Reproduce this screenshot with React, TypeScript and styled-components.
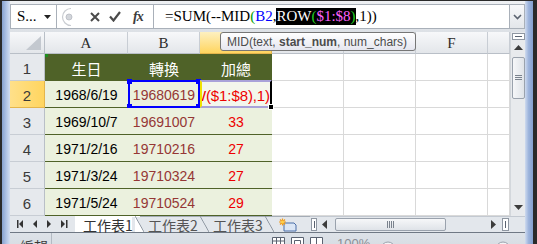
import styled, { createGlobalStyle, css } from 'styled-components';

const GlobalStyle = createGlobalStyle`
  *, *::before, *::after { box-sizing: border-box; }
  html, body { margin: 0; padding: 0; background: #ffffff; }
  body { font-family: "Liberation Sans", Arial, sans-serif; }
`;

const Window = styled.div`
  width: 537px;
  height: 244px;
  overflow: hidden;
  display: flex;
  border-top: 1px solid #2a2a2a;
`;

const FrameLeft = styled.div`
  width: 10px;
  flex: none;
  border-left: 2px solid #2a2a2a;
  background: linear-gradient(to right, #86a1cf, #b4c7e7 60%, #d3def0);
`;

const FrameRight = styled.div`
  width: 12px;
  flex: none;
  border-right: 4px solid #2a2a2a;
  background: linear-gradient(to right, #cfdbef, #9db4dc 45%, #839fcf);
`;

const Main = styled.div`
  position: relative;
  flex: 1;
  min-width: 0;
  display: flex;
  flex-direction: column;
  background: #e3e7ec;
`;

/* ---------- formula bar ---------- */

const FormulaStrip = styled.div`
  height: 31px;
  flex: none;
  display: flex;
  padding: 3px 0;
  background: linear-gradient(#eef0f3, #dde1e6);
`;

const NameBox = styled.div`
  width: 47px;
  display: flex;
  align-items: center;
  padding: 0 5px 0 6px;
  background: #fff;
  border: 1px solid #a9b0b9;
  font: 15px "Liberation Serif", serif;
  color: #000;

  svg { margin-left: auto; }
`;

const ToolGroup = styled.div`
  width: 96px;
  display: flex;
  align-items: center;
  background: #fff;
  border-top: 1px solid #a9b0b9;
  border-bottom: 1px solid #a9b0b9;
`;

const ToolIcon = styled.span<{ $gap: number }>`
  display: flex;
  margin-left: ${p => p.$gap}px;
`;

const Fx = styled.span`
  margin-left: 12px;
  font: italic bold 14px "Liberation Serif", serif;
  color: #3c3c3c;
  letter-spacing: -1px;
`;

const FormulaInput = styled.div`
  flex: 1;
  display: flex;
  align-items: center;
  padding-left: 11px;
  background: #fff;
  border: 1px solid #a9b0b9;
  font: 15px "Liberation Serif", serif;
  color: #000;
  white-space: pre;
`;

const Tok = styled.span<{ $c: string }>`
  color: ${p => p.$c};
`;

const Selected = styled.span`
  background: #000;
  color: #fff;
`;

const ExpandBtn = styled.div`
  width: 15px;
  display: flex;
  align-items: center;
  justify-content: center;
  background: linear-gradient(#f7f8fa, #e3e6ea);
  border: 1px solid #a9b0b9;
  border-left: none;
`;

/* ---------- sheet ---------- */

const SheetRow = styled.div`
  height: 184px;
  flex: none;
  display: flex;
`;

const Grid = styled.div`
  width: 500px;
  display: grid;
  grid-template-columns: 35px 83px repeat(5, 72px) 22px;
  grid-template-rows: 22px repeat(6, 27px);
  background: #fff;
`;

const Corner = styled.div`
  display: flex;
  align-items: flex-end;
  justify-content: flex-end;
  padding: 0 3px 3px 0;
  background: linear-gradient(#f7f8fa, #e3e6ea);
  border-right: 1px solid #b9bfc7;
  border-bottom: 1px solid #b9bfc7;
`;

const ColHead = styled.div<{ $sel?: boolean }>`
  display: flex;
  align-items: center;
  justify-content: center;
  padding-top: 2px;
  font: 15px "Liberation Serif", serif;
  color: #2b2b2b;
  background: ${p => (p.$sel ? 'linear-gradient(#fdf0c0, #ffd55f)' : 'linear-gradient(#f7f8fa, #e3e6ea)')};
  border-right: 1px solid ${p => (p.$sel ? '#e4b54c' : '#c8cdd4')};
  border-bottom: 1px solid ${p => (p.$sel ? '#e4b54c' : '#b9bfc7')};
`;

const RowHead = styled.div<{ $sel?: boolean }>`
  display: flex;
  align-items: center;
  justify-content: center;
  padding-top: 3px;
  font-size: 15px;
  color: #3a3a3a;
  background: ${p => (p.$sel ? 'linear-gradient(to right, #ffe08a, #ffd55f)' : '#e6e9ed')};
  border-right: 1px solid ${p => (p.$sel ? '#e4b54c' : '#b9bfc7')};
  border-bottom: 1px solid ${p => (p.$sel ? '#e4b54c' : '#c8cdd4')};
`;

type Kind = 'title' | 'data' | 'blank';

const Cell = styled.div<{ $kind: Kind; $ink?: string }>`
  position: relative;
  display: flex;
  align-items: center;
  justify-content: center;
  padding-top: 2px;
  white-space: nowrap;
  font-size: 14px;
  color: ${p => p.$ink || '#000'};

  ${p => p.$kind === 'title' && css`
    background: #4f6228;
    color: #fff;
    font: 15px "Noto Sans CJK TC", sans-serif;
    border-bottom: 1px solid #4f6228;
  `}
  ${p => p.$kind === 'data' && css`
    background: #ebf1de;
    border-bottom: 1px solid #4f6228;
  `}
  ${p => p.$kind === 'blank' && css`
    border-right: 1px solid #d9d9d9;
    border-bottom: 1px solid #d9d9d9;
  `}
`;

const ErrorMark = styled.span`
  position: absolute;
  left: 0;
  top: 0;
  width: 3px;
  height: 3px;
  background: #1e8e1e;
`;

const RefBox = styled.span`
  position: absolute;
  inset: -1px 0 -1px 0;
  border: 2px solid #0000ff;
  pointer-events: none;
`;

const Handle = styled.span<{ $x: 'l' | 'r'; $y: 't' | 'b' }>`
  position: absolute;
  width: 5px;
  height: 5px;
  background: #0000ff;
  ${p => (p.$x === 'l' ? 'left: -3px;' : 'right: -3px;')}
  ${p => (p.$y === 't' ? 'top: -3px;' : 'bottom: -3px;')}
`;

const EditCell = styled.div`
  position: relative;
  z-index: 2;
  display: flex;
  justify-content: flex-end;
  align-items: center;
  background: #f3f6ec;
  border-top: 2px solid #a9a2d9;
  border-bottom: 2px solid #a9a2d9;
  border-left: 2px solid #f0e200;
  border-right: 2px solid #000;
  margin-top: -1px;
`;

const EditText = styled.div`
  width: 100%;
  display: flex;
  justify-content: flex-end;
  overflow: hidden;
  white-space: nowrap;
  padding-top: 2px;
  font-size: 15px;
  letter-spacing: -0.1px;
  color: #ee0000;
`;

const FillHandle = styled.span`
  position: absolute;
  right: -4px;
  bottom: -4px;
  width: 6px;
  height: 6px;
  background: #000;
  border: 1px solid #fff;
`;

const Tooltip = styled.div`
  position: absolute;
  left: 210px;
  top: 31px;
  z-index: 5;
  width: 196px;
  height: 19px;
  padding: 0 6px;
  display: flex;
  align-items: center;
  background: linear-gradient(#ffffff, #e5e6ef);
  border: 1px solid #767676;
  border-radius: 3px;
  font-size: 12px;
  color: #4c4c4c;
  white-space: pre;

  b { font-weight: bold; }
`;

const VScroll = styled.div`
  width: 15px;
  display: flex;
  flex-direction: column;
  align-items: center;
  background: #e8eaed;
  border-left: 1px solid #d3d7dc;
`;

const SplitBox = styled.div`
  width: 13px;
  height: 7px;
  margin-top: 1px;
  display: flex;
  align-items: center;
  justify-content: center;
  background: #fff;
  border: 1px solid #8f97a2;

  &::after {
    content: '';
    width: 7px;
    height: 1px;
    background: #5a6270;
  }
`;

const Arrow = styled.div<{ $h: number }>`
  height: ${p => p.$h}px;
  width: 100%;
  display: flex;
  align-items: center;
  justify-content: center;
  flex: none;
`;

const VThumb = styled.div`
  width: 13px;
  height: 42px;
  margin-top: 3px;
  display: flex;
  align-items: center;
  justify-content: center;
  border: 1px solid #9aa2ad;
  border-radius: 2px;
  background: linear-gradient(to right, #f6f7f9, #dfe3e8);
`;

const Spacer = styled.div`
  flex: 1;
`;

/* ---------- sheet tabs ---------- */

const TabBar = styled.div`
  height: 16px;
  flex: none;
  display: flex;
  align-items: stretch;
  background: #e3e7ec;
`;

const Nav = styled.div`
  width: 65px;
  display: flex;
  align-items: center;
`;

const Tab = styled.div<{ $active?: boolean }>`
  position: relative;
  width: 65px;
  padding-left: 8px;
  display: flex;
  align-items: center;
  font: 14px "Noto Sans CJK TC", sans-serif;
  color: ${p => (p.$active ? '#333' : '#555')};
  background: ${p => (p.$active ? 'linear-gradient(to right, #fff calc(100% - 8px), transparent calc(100% - 8px))' : 'transparent')};
  border-top: 1px solid ${p => (p.$active ? '#fff' : '#a4acb6')};

  &::after {
    content: '';
    position: absolute;
    right: -4px;
    top: -1px;
    bottom: 0;
    width: 9px;
    background: ${p =>
      p.$active
        ? 'linear-gradient(to top right, #fff calc(50% - 0.8px), #8a939e 50%, transparent calc(50% + 0.8px))'
        : 'linear-gradient(to top right, transparent calc(50% - 0.8px), #8a939e 50%, transparent calc(50% + 0.8px))'};
  }
`;

const NewTab = styled.div`
  width: 40px;
  display: flex;
  align-items: center;
  padding-left: 9px;
  border-top: 1px solid #a4acb6;
`;

const HScroll = styled.div`
  flex: 1;
  display: flex;
  align-items: center;
  border-top: 1px solid #c3c9d1;
`;

const Splitter = styled.div`
  width: 6px;
  height: 13px;
  margin-left: 1px;
  display: flex;
  justify-content: center;
  align-items: center;
  background: #fff;
  border: 1px solid #8f97a2;

  &::after {
    content: '';
    width: 1px;
    height: 7px;
    background: #5a6270;
  }
`;

const HArrow = styled.div`
  width: 15px;
  display: flex;
  justify-content: center;
`;

const HThumb = styled.div`
  width: 111px;
  height: 13px;
  margin-left: 3px;
  display: flex;
  align-items: center;
  justify-content: center;
  border: 1px solid #9aa2ad;
  border-radius: 2px;
  background: linear-gradient(#f6f7f9, #dfe3e8);
`;

const CornerBox = styled.div`
  width: 7px;
  height: 13px;
  margin: 0 16px 0 1px;
  display: flex;
  justify-content: center;
  align-items: center;
  background: #fff;
  border: 1px solid #8f97a2;

  &::after {
    content: '';
    width: 1px;
    height: 7px;
    background: #5a6270;
  }
`;

/* ---------- status bar ---------- */

const StatusBar = styled.div`
  flex: 1;
  display: flex;
  align-items: flex-start;
  background: linear-gradient(#dde2e8, #d3d9e0);
  border-top: 1px solid #6f7884;
`;

const Mode = styled.div`
  width: 42px;
  height: 100%;
  padding: 3px 0 0 10px;
  font: 14px "Noto Sans CJK TC", sans-serif;
  color: #3a3a3a;
  border-right: 1px solid #b3bac3;
`;

const Views = styled.div`
  margin-left: 220px;
  padding-top: 4px;
  display: flex;
  gap: 6px;
`;

const Zoom = styled.div`
  margin-left: 14px;
  padding-top: 3px;
  font-size: 13px;
  color: #8a8f96;
`;

const Slider = styled.div`
  margin-left: 10px;
  padding-top: 4px;
`;

/* ---------- data ---------- */

// C, D and E headers sit under the function tooltip, so no label shows
const columns = [
  { label: 'A' },
  { label: 'B' },
  { label: '', sel: true },
  { label: '' },
  { label: '' },
  { label: 'F' },
  { label: '' },
];

const rows: { a: string; b: string; c: string }[] = [
  { a: '1968/6/19', b: '19680619', c: '' },
  { a: '1969/10/7', b: '19691007', c: '33' },
  { a: '1971/2/16', b: '19710216', c: '27' },
  { a: '1971/3/24', b: '19710324', c: '27' },
  { a: '1971/5/24', b: '19710524', c: '29' },
];

const titles = ['生日', '轉換', '加總'];

const B_INK = '#953735';
const C_INK = '#ee0000';

const Blanks = () => (
  <>
    {[0, 1, 2, 3].map(i => (
      <Cell key={i} $kind="blank" />
    ))}
  </>
);

const App = () => {
  return (
    <>
      <GlobalStyle />
      <Window>
        <FrameLeft />
        <Main>
          <FormulaStrip>
            <NameBox>
              S...
              <svg width="7" height="4" viewBox="0 0 7 4">
                <path d="M0 0h7L3.5 4z" fill="#222" />
              </svg>
            </NameBox>
            <ToolGroup>
              <ToolIcon $gap={3}>
                <svg width="17" height="20" viewBox="0 0 17 20">
                  <path d="M11 1.5A8.5 8.5 0 0 0 11 18.5" fill="none" stroke="#c9ccd1" strokeWidth="1.2" />
                  <circle cx="9" cy="10" r="3" fill="#d2d5da" stroke="#b6bac1" strokeWidth="0.8" />
                </svg>
              </ToolIcon>
              <ToolIcon $gap={13}>
                <svg width="10" height="10" viewBox="0 0 10 10">
                  <path d="M1 1l8 8M9 1l-8 8" stroke="#4a4a4a" strokeWidth="2" />
                </svg>
              </ToolIcon>
              <ToolIcon $gap={9}>
                <svg width="12" height="11" viewBox="0 0 12 11">
                  <path d="M1 5.5l3.5 4L11 1" fill="none" stroke="#4a4a4a" strokeWidth="2.2" />
                </svg>
              </ToolIcon>
              <Fx>fx</Fx>
            </ToolGroup>
            <FormulaInput>
              =SUM(--MID<Tok $c="#00a000">(</Tok>
              <Tok $c="#0000ff">B2</Tok>,
              <Selected>
                ROW<Tok $c="#20d020">(</Tok>
                <Tok $c="#ff60ff">$1:$8</Tok>
                <Tok $c="#20d020">)</Tok>
              </Selected>
              ,1))
            </FormulaInput>
            <ExpandBtn>
              <svg width="9" height="6" viewBox="0 0 9 6">
                <path d="M1 1l3.5 3.5L8 1" fill="none" stroke="#5b6370" strokeWidth="1.6" />
              </svg>
            </ExpandBtn>
          </FormulaStrip>

          <SheetRow>
            <Grid>
              <Corner>
                <svg width="15" height="14" viewBox="0 0 15 14">
                  <path d="M15 0V14H0z" fill="#c3c8cf" />
                </svg>
              </Corner>
              {columns.map((c, i) => (
                <ColHead key={i} $sel={c.sel}>
                  {c.label}
                </ColHead>
              ))}

              <RowHead>1</RowHead>
              {titles.map((t, i) => (
                <Cell key={t} $kind="title">
                  {i === 0 && <ErrorMark />}
                  {t}
                </Cell>
              ))}
              <Blanks />

              {rows.map((r, i) => (
                <>
                  <RowHead key={`h${i}`} $sel={i === 0}>
                    {i + 2}
                  </RowHead>
                  <Cell key={`a${i}`} $kind="data">
                    {r.a}
                  </Cell>
                  <Cell key={`b${i}`} $kind="data" $ink={B_INK}>
                    {r.b}
                    {i === 0 && (
                      <RefBox>
                        <Handle $x="l" $y="t" />
                        <Handle $x="r" $y="t" />
                        <Handle $x="l" $y="b" />
                        <Handle $x="r" $y="b" />
                      </RefBox>
                    )}
                  </Cell>
                  {i === 0 ? (
                    <EditCell key="c0">
                      <EditText>W($1:$8),1)</EditText>
                      <FillHandle />
                    </EditCell>
                  ) : (
                    <Cell key={`c${i}`} $kind="data" $ink={C_INK}>
                      {r.c}
                    </Cell>
                  )}
                  <Blanks key={`x${i}`} />
                </>
              ))}
            </Grid>

            <VScroll>
              <SplitBox />
              <Arrow $h={14}>
                <svg width="9" height="5" viewBox="0 0 9 5">
                  <path d="M0 5L4.5 0 9 5z" fill="#3c3c3c" />
                </svg>
              </Arrow>
              <VThumb>
                <svg width="7" height="6" viewBox="0 0 7 6">
                  <path d="M0 .5h7M0 2.5h7M0 4.5h7" stroke="#7a828d" strokeWidth="1" />
                </svg>
              </VThumb>
              <Spacer />
              <Arrow $h={18}>
                <svg width="9" height="5" viewBox="0 0 9 5">
                  <path d="M0 0h9L4.5 5z" fill="#3c3c3c" />
                </svg>
              </Arrow>
            </VScroll>
          </SheetRow>

          <TabBar>
            <Nav>
              <svg width="65" height="16" viewBox="0 0 65 16">
                <g fill="#333">
                  <rect x="7" y="4" width="1.5" height="8" />
                  <path d="M13 4v8L9 8z" />
                  <path d="M27 4v8L23 8z" />
                  <path d="M37 4v8L41 8z" />
                  <path d="M51 4v8L55 8z" />
                  <rect x="56" y="4" width="1.5" height="8" />
                </g>
              </svg>
            </Nav>
            <Tab $active>工作表1</Tab>
            <Tab>工作表2</Tab>
            <Tab>工作表3</Tab>
            <NewTab>
              <svg width="18" height="14" viewBox="0 0 18 14">
                <path d="M5 5h10l2 2v6H5z" fill="#dbe6f5" stroke="#4b6ea8" strokeWidth="1" />
                <path d="M3.5 0.5v7M0 4h7M1 1.5l5 5M6 1.5l-5 5" stroke="#f09a1a" strokeWidth="1.2" />
                <circle cx="3.5" cy="4" r="1.6" fill="#ffd24a" />
              </svg>
            </NewTab>
            <HScroll>
              <Splitter />
              <HArrow>
                <svg width="5" height="9" viewBox="0 0 5 9">
                  <path d="M5 0v9L0 4.5z" fill="#3c3c3c" />
                </svg>
              </HArrow>
              <HThumb>
                <svg width="7" height="7" viewBox="0 0 7 7">
                  <path d="M.5 0v7M2.5 0v7M4.5 0v7M6.5 0v7" stroke="#7a828d" strokeWidth="1" />
                </svg>
              </HThumb>
              <Spacer />
              <HArrow>
                <svg width="5" height="9" viewBox="0 0 5 9">
                  <path d="M0 0v9L5 4.5z" fill="#3c3c3c" />
                </svg>
              </HArrow>
              <CornerBox />
            </HScroll>
          </TabBar>

          <StatusBar>
            <Mode>編輯</Mode>
            <Views>
              <svg width="13" height="10" viewBox="0 0 13 10">
                <path d="M.5.5h12v9H.5zM.5 4h12M4.5.5v9M8.5.5v9" fill="#fff" stroke="#5a6270" strokeWidth="1" />
              </svg>
              <svg width="13" height="10" viewBox="0 0 13 10">
                <path d="M.5.5h12v9H.5z" fill="#fff" stroke="#5a6270" strokeWidth="1" />
                <path d="M3.5 3.5h6v6h-6z" fill="#fff" stroke="#5a6270" strokeWidth="1" />
              </svg>
              <svg width="13" height="10" viewBox="0 0 13 10">
                <path d="M.5.5h12v9H.5zM6.5.5v9" fill="#fff" stroke="#5a6270" strokeWidth="1" />
              </svg>
            </Views>
            <Zoom>100%</Zoom>
            <Slider>
              <svg width="131" height="10" viewBox="0 0 131 10">
                <circle cx="8" cy="8" r="7" fill="#f2f4f6" stroke="#9aa2ad" strokeWidth="1" />
                <path d="M65.5 6v4" stroke="#8a919b" strokeWidth="1" />
                <circle cx="123" cy="8" r="7" fill="#f2f4f6" stroke="#9aa2ad" strokeWidth="1" />
              </svg>
            </Slider>
          </StatusBar>

          <Tooltip>
            MID(text, <b>start_num</b>, num_chars)
          </Tooltip>
        </Main>
        <FrameRight />
      </Window>
    </>
  );
};

export default App;
